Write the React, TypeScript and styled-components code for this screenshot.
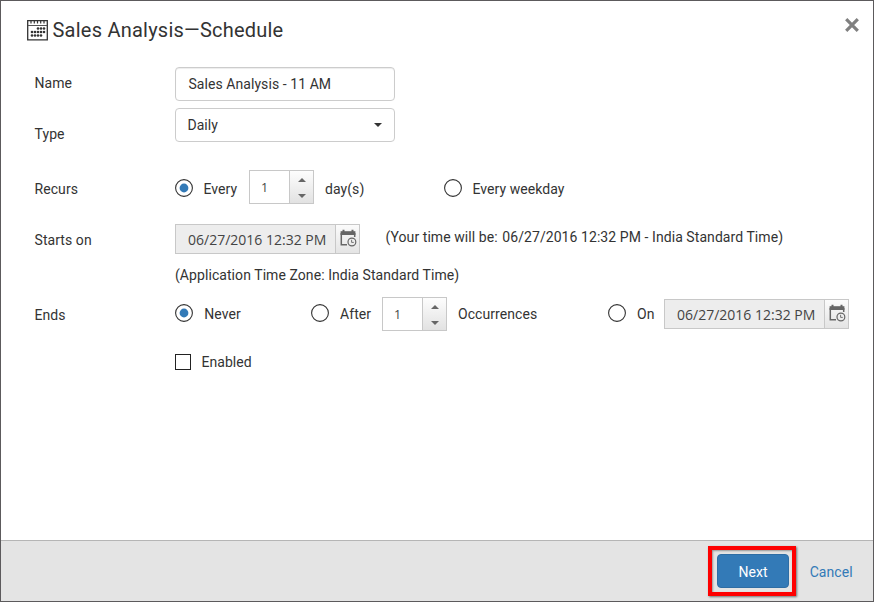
import React from "react";
import styled, { createGlobalStyle } from "styled-components";

const GlobalStyle = createGlobalStyle`
  * { box-sizing: border-box; }
  body { margin: 0; background: #fff; }
`;

const Dialog = styled.div`
  width: 874px;
  height: 602px;
  display: flex;
  flex-direction: column;
  border: 1px solid #5c5a5c;
  background: #fff;
  color: #333;
  font: 14px/20px Roboto, "Liberation Sans", sans-serif;
  letter-spacing: 0.07px;
  white-space: nowrap;
  overflow: hidden;
`;

const Header = styled.header`
  display: flex;
  align-items: center;
  height: 58px;
  padding: 0 14px 0 26px;
`;

const Title = styled.h1`
  flex: 1;
  margin: 0 0 0 4.5px;
  font-size: 20px;
  line-height: 28px;
  font-weight: 400;
  letter-spacing: 0.23px;
`;

const CloseButton = styled.button`
  display: flex;
  margin: 0 0 10px;
  padding: 0;
  border: 0;
  background: none;
`;

const Form = styled.form`
  flex: 1;
  display: flex;
  flex-direction: column;
  padding: 8px 0 0 33px;
`;

const Row = styled.div<{ $height: number; $gap?: number }>`
  display: grid;
  grid-template-columns: 141px 1fr;
  grid-template-rows: 100%;
  align-items: center;
  height: ${(p) => p.$height}px;
  margin-top: ${(p) => p.$gap ?? 0}px;
`;

const FieldLabel = styled.span<{ $drop?: number }>`
  padding-left: 0.5px;
  margin-top: ${(p) => p.$drop ?? 0}px;
`;

const Controls = styled.div`
  display: flex;
  align-items: center;
`;

const TextBox = styled.div`
  width: 220px;
  height: 34px;
  padding: 6px 12px 6px 12.4px;
  border: 1px solid #ccc;
  border-radius: 4px;
  box-shadow: inset 0 1px 1px rgba(0, 0, 0, 0.075);
`;

const SelectBox = styled(TextBox)`
  display: flex;
  justify-content: space-between;
  align-items: center;
  padding: 0 12px 0 11.4px;
  box-shadow: none;
`;

const Caret = styled.i`
  border: 4px solid transparent;
  border-top-color: #333;
  border-bottom: 0;
`;

const Option = styled.label<{ $width?: number; $gap?: number; $lift?: number }>`
  display: flex;
  align-items: center;
  width: ${(p) => (p.$width ? `${p.$width}px` : "auto")};
  gap: ${(p) => p.$gap ?? 10.4}px;
  margin-bottom: ${(p) => p.$lift ?? 0}px;
`;

const OptionText = styled.span`
  padding-top: 2px;
`;

const SpinnerFrame = styled.div`
  display: grid;
  grid-template-columns: 1fr 24px;
  width: 65px;
  height: 34px;
  border: 1px solid #c8c8c8;
`;

const SpinnerValue = styled.span`
  padding: 7px 0 0 11px;
  font-family: "Open Sans", "Noto Sans", sans-serif;
  font-size: 12.5px;
  color: #444;
`;

const SpinnerButtons = styled.div`
  display: flex;
  flex-direction: column;
  align-items: center;
  justify-content: space-between;
  padding: 7px 0 5px;
  border-left: 1px solid #c8c8c8;
  background: linear-gradient(#fdfdfd, #e2e2e2);
`;

const Arrow = styled.i<{ $up?: boolean }>`
  border: 4px solid transparent;
  ${(p) =>
    p.$up
      ? "border-bottom-color: #666; border-top: 0;"
      : "border-top-color: #666; border-bottom: 0;"}
`;

const Unit = styled.span<{ $width: number; $drop: number }>`
  width: ${(p) => p.$width}px;
  padding-left: 11px;
  margin-top: ${(p) => p.$drop}px;
`;

const DateFrame = styled.div`
  display: grid;
  grid-template-columns: 1fr 24px;
  width: 185px;
  height: 30px;
  border: 1px solid #c8c8c8;
  background: #ededed;
`;

const DateValue = styled.span`
  padding: 5px 0 0 12px;
  font-family: "Open Sans", "Noto Sans", sans-serif;
  font-size: 14px;
  letter-spacing: 0;
  color: #444;
`;

const DateButton = styled.span`
  display: flex;
  padding: 4px 0 0 4px;
  border-left: 1px solid #c8c8c8;
  background: linear-gradient(#fbfbfb, #e4e4e4);
`;

const LocalTime = styled.span`
  display: flex;
  gap: 4.6px;
  padding: 0 0 4px 25.5px;
`;

const CheckBox = styled.i`
  width: 16px;
  height: 16px;
  border: 1px solid #222;
`;

const Footer = styled.footer`
  display: flex;
  justify-content: flex-end;
  align-items: center;
  height: 61px;
  padding-right: 20px;
  border-top: 1px solid #b5b5b5;
  background: #e4e4e4;
`;

const Highlight = styled.div`
  width: 88px;
  height: 50px;
  padding: 4px 3px 4px 5px;
  border: 4px solid #fe0000;
  box-shadow: 1px 1px 2px rgba(0, 0, 0, 0.5), inset 1px 1px 2px rgba(0, 0, 0, 0.35);
`;

const NextButton = styled.button`
  display: block;
  width: 72px;
  height: 34px;
  padding: 2px 0 0;
  border: 1px solid #2e6da4;
  border-radius: 4px;
  background: #337ab7;
  color: #fff;
  font: inherit;
`;

const CancelLink = styled.a`
  width: 44px;
  margin-left: 13px;
  padding: 2px 0 0 0.7px;
  color: #337ab7;
`;

function ScheduleIcon() {
  const dots = [
    [11, 8.5], [14, 8.5], [17, 8.5],
    [5, 12], [8, 12], [11, 12], [14, 12], [17, 12],
    [5, 15.5], [8, 15.5], [11, 15.5], [14, 15.5],
  ];
  return (
    <svg width="21" height="21" viewBox="0 0 21 21" fill="none" stroke="#333">
      <path d="M.7.7h19.6v19.1H.7z" strokeWidth="1.3" />
      <path d="M1 5.5h19" strokeWidth="1" stroke="#555" />
      <path d="M4 1v2.5M7.3 1v2.5M10.5 1v2.5M13.7 1v2.5M17 1v2.5" strokeWidth="1.2" />
      {dots.map(([x, y]) => (
        <circle key={`${x}-${y}`} cx={x} cy={y} r="1.3" fill="#333" stroke="none" />
      ))}
    </svg>
  );
}

function CalendarClockIcon() {
  return (
    <svg width="17" height="19" viewBox="0 0 17 19" fill="none" stroke="#666">
      <path d="M1.3 4v11.7H7M14.7 4v4" strokeWidth="1.5" />
      <path d="M.6 2.2h14.8v3.8H.6z" fill="#666" stroke="none" />
      <path d="M3.5 .8v3M12.5 .8v3" strokeWidth="2" />
      <circle cx="11.9" cy="13" r="3.9" strokeWidth="1.2" />
      <path d="M11.6 10.8v2.6h2.2" strokeWidth="0.9" />
    </svg>
  );
}

function Radio({ checked = false }: { checked?: boolean }) {
  return (
    <svg width="18" height="18" viewBox="0 0 18 18">
      <circle cx="9" cy="9" r="8.4" fill="#fff" stroke="#333" strokeWidth="1.1" />
      {checked && <circle cx="9" cy="9" r="4.4" fill="#337ab7" />}
    </svg>
  );
}

function Spinner({ value }: { value: number }) {
  return (
    <SpinnerFrame>
      <SpinnerValue>{value}</SpinnerValue>
      <SpinnerButtons>
        <Arrow $up />
        <Arrow />
      </SpinnerButtons>
    </SpinnerFrame>
  );
}

function DatePicker({ value }: { value: string }) {
  return (
    <DateFrame>
      <DateValue>{value}</DateValue>
      <DateButton>
        <CalendarClockIcon />
      </DateButton>
    </DateFrame>
  );
}

export default function App() {
  return (
    <>
      <GlobalStyle />
      <Dialog>
        <Header>
          <ScheduleIcon />
          <Title>Sales Analysis—Schedule</Title>
          <CloseButton type="button" aria-label="Close">
            <svg width="14" height="14" viewBox="0 0 14 14" stroke="#808080" strokeWidth="3.2">
              <path d="M1.2 1.2l11.6 11.6M12.8 1.2L1.2 12.8" />
            </svg>
          </CloseButton>
        </Header>
        <Form>
          <Row $height={34}>
            <FieldLabel $drop={-2}>Name</FieldLabel>
            <TextBox>Sales Analysis - 11 AM</TextBox>
          </Row>
          <Row $height={34} $gap={7}>
            <FieldLabel $drop={18}>Type</FieldLabel>
            <SelectBox>
              Daily
              <Caret />
            </SelectBox>
          </Row>
          <Row $height={34} $gap={28}>
            <FieldLabel $drop={4}>Recurs</FieldLabel>
            <Controls>
              <Option $width={74} $lift={-2}>
                <Radio checked />
                <OptionText>Every</OptionText>
              </Option>
              <Spinner value={1} />
              <Unit $width={130} $drop={4}>day(s)</Unit>
              <Option $lift={-2}>
                <Radio />
                <OptionText>Every weekday</OptionText>
              </Option>
            </Controls>
          </Row>
          <Row $height={30} $gap={20}>
            <FieldLabel $drop={2}>Starts on</FieldLabel>
            <Controls>
              <DatePicker value="06/27/2016 12:32 PM" />
              <LocalTime>
                <span>(Your time will be:</span>
                <span>06/27/2016 12:32 PM - India Standard Time)</span>
              </LocalTime>
            </Controls>
          </Row>
          <Row $height={20} $gap={11}>
            <span />
            <span>(Application Time Zone: India Standard Time)</span>
          </Row>
          <Row $height={34} $gap={12}>
            <FieldLabel $drop={2}>Ends</FieldLabel>
            <Controls>
              <Option $width={136} $gap={11.3} $lift={2}>
                <Radio checked />
                <OptionText>Never</OptionText>
              </Option>
              <Option $width={71} $gap={11} $lift={2}>
                <Radio />
                <OptionText>After</OptionText>
              </Option>
              <Spinner value={1} />
              <Unit $width={161} $drop={0}>Occurrences</Unit>
              <Option $width={56} $gap={11} $lift={2}>
                <Radio />
                <OptionText>On</OptionText>
              </Option>
              <DatePicker value="06/27/2016 12:32 PM" />
            </Controls>
          </Row>
          <Row $height={22} $gap={20}>
            <span />
            <Option>
              <CheckBox />
              <span>Enabled</span>
            </Option>
          </Row>
        </Form>
        <Footer>
          <Highlight>
            <NextButton type="button">Next</NextButton>
          </Highlight>
          <CancelLink>Cancel</CancelLink>
        </Footer>
      </Dialog>
    </>
  );
}
